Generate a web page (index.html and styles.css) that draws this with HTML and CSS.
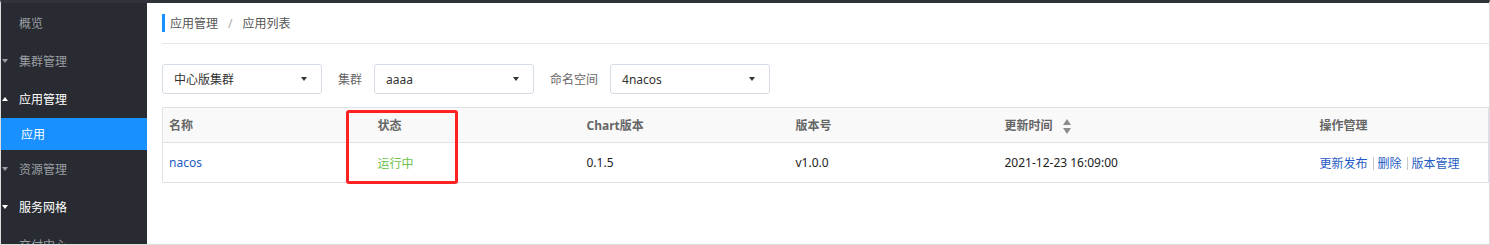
FILE: index.html
```html
<!DOCTYPE html>
<html lang="zh-CN">
<head>
  <meta charset="UTF-8" />
  <title>应用列表</title>
  <link rel="stylesheet" href="styles.css">
</head>
<body>
  <div class="frame">
    <!-- Left navigation -->
    <div class="sidebar">
      <div class="nav-item"><span class="arrow"></span>概览</div>
      <div class="nav-item"><span class="arrow down"></span>集群管理</div>
      <div class="nav-item open"><span class="arrow up"></span>应用管理</div>
      <div class="nav-sub active">应用</div>
      <div class="nav-item"><span class="arrow down"></span>资源管理</div>
      <div class="nav-item open"><span class="arrow down"></span>服务网格</div>
      <div class="nav-item"><span class="arrow"></span>交付中心</div>
    </div>

    <div class="main">
      <div class="breadcrumb">
        <span class="crumb-bar"></span>
        <span>应用管理</span>
        <span class="crumb-sep">/</span>
        <span>应用列表</span>
      </div>

      <div class="filters">
        <div class="select"><span>中心版集群</span><span class="caret"></span></div>
        <label class="filter-label">集群</label>
        <div class="select"><span>aaaa</span><span class="caret"></span></div>
        <label class="filter-label">命名空间</label>
        <div class="select"><span>4nacos</span><span class="caret"></span></div>
      </div>

      <div class="table-wrap">
        <table class="app-table">
          <colgroup>
            <col style="width: 209px">
            <col style="width: 209px">
            <col style="width: 209px">
            <col style="width: 209px">
            <col style="width: 315px">
            <col>
          </colgroup>
          <thead>
            <tr>
              <th>名称</th>
              <th>状态</th>
              <th>Chart版本</th>
              <th>版本号</th>
              <th>更新时间 <span class="sort"><i class="sort-up"></i><i class="sort-down"></i></span></th>
              <th>操作管理</th>
            </tr>
          </thead>
          <tbody>
            <tr>
              <td><a class="link" href="#">nacos</a></td>
              <td class="status-running">运行中</td>
              <td>0.1.5</td>
              <td>v1.0.0</td>
              <td>2021-12-23 16:09:00</td>
              <td class="ops">
                <a class="link" href="#">更新发布</a><span class="ops-sep"></span><a class="link" href="#">删除</a><span class="ops-sep"></span><a class="link" href="#">版本管理</a>
              </td>
            </tr>
          </tbody>
        </table>
        <!-- red annotation box over the status column -->
        <div class="highlight"></div>
      </div>
    </div>
  </div>
</body>
</html>
```

FILE: styles.css
```css
body {
  margin: 0;
  font-family: "Noto Sans", "Noto Sans CJK SC", sans-serif;
  font-size: 12px;
  color: #333;
  background: #fff;
}

.frame {
  width: 1490px;
  height: 245px;
  box-sizing: border-box;
  border: 1px solid #dcdcdc;
  border-top: 3px solid #30333a;
  display: flex;
  overflow: hidden;
}

/* Sidebar */
.sidebar {
  width: 146px;
  flex-shrink: 0;
  background: #282b31;
  padding-top: 1px;
}

.nav-item {
  height: 38px;
  display: flex;
  align-items: center;
  color: #9a9da3;
  font-size: 12px;
}

.nav-item.open {
  color: #fff;
}

.arrow {
  width: 18px;
  height: 4px;
  position: relative;
}

.arrow.down::before,
.arrow.up::before {
  content: "";
  position: absolute;
  left: 1px;
  top: 0;
  border-left: 3px solid transparent;
  border-right: 3px solid transparent;
}

.arrow.down::before {
  border-top: 4px solid currentColor;
}

.arrow.up::before {
  border-bottom: 4px solid currentColor;
}

.nav-sub {
  height: 32px;
  display: flex;
  align-items: center;
  padding-left: 20px;
  color: #fff;
}

.nav-sub.active {
  background: #1890ff;
}

/* Main area */
.main {
  flex: 1;
  padding-left: 15px;
  min-width: 0;
}

.breadcrumb {
  display: flex;
  align-items: center;
  padding: 11px 0;
  border-bottom: 1px solid #e8e8e8;
  color: #555;
}

.crumb-bar {
  width: 3px;
  height: 18px;
  background: #1890ff;
  margin-right: 5px;
}

.crumb-sep {
  color: #aaa;
  margin: 0 10px;
}

.filters {
  display: flex;
  align-items: center;
  margin-top: 20px;
}

.select {
  width: 160px;
  height: 30px;
  box-sizing: border-box;
  border: 1px solid #d5dce6;
  border-radius: 3px;
  display: flex;
  align-items: center;
  justify-content: space-between;
  padding: 0 14px 0 11px;
  color: #333;
}

.caret {
  width: 0;
  height: 0;
  border-left: 3px solid transparent;
  border-right: 3px solid transparent;
  border-top: 4px solid #333;
}

.filter-label {
  color: #666;
  margin: 0 12px 0 16px;
}

/* Table */
.table-wrap {
  position: relative;
  margin-top: 13px;
}

.app-table {
  width: 100%;
  table-layout: fixed;
  border-collapse: collapse;
  border: 1px solid #dfe3e8;
}

.app-table th {
  height: 34px;
  background: #f9f9f9;
  color: #666;
  font-weight: bold;
  text-align: left;
  padding: 0 6px;
  border-bottom: 1px solid #dfe3e8;
}

.app-table td {
  height: 39px;
  padding: 0 6px;
  color: #222;
  border-bottom: 1px solid #dfe3e8;
}

.link {
  color: #1f5bc4;
  text-decoration: none;
}

.status-running {
  color: #6cc24a !important;
}

.ops-sep {
  display: inline-block;
  width: 1px;
  height: 13px;
  background: #c8c8c8;
  margin: 0 4px 0 5px;
  vertical-align: -2px;
}

.sort {
  display: inline-flex;
  flex-direction: column;
  gap: 3px;
  margin-left: 7px;
  vertical-align: middle;
}

.sort i {
  width: 0;
  height: 0;
  border-left: 4px solid transparent;
  border-right: 4px solid transparent;
}

.sort-up {
  border-bottom: 6px solid #8c8c8c;
}

.sort-down {
  border-top: 6px solid #8c8c8c;
}

.highlight {
  position: absolute;
  left: 184px;
  top: 3px;
  width: 112px;
  height: 74px;
  box-sizing: border-box;
  border: 3px solid #ff2222;
  border-radius: 3px;
}
```
